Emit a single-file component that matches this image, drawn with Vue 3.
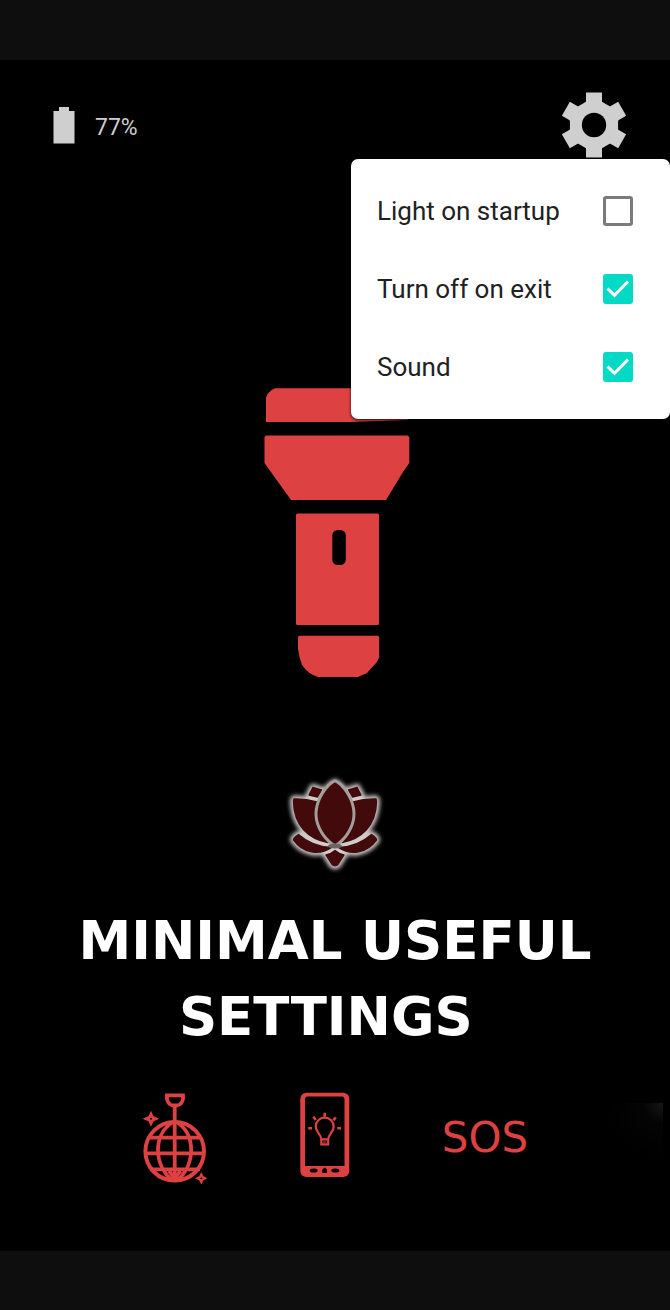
<script setup>
import { ref } from 'vue'

const battery = ref(77)
const options = ref([
  { id: 'startup', label: 'Light on startup', on: false },
  { id: 'exit', label: 'Turn off on exit', on: true },
  { id: 'sound', label: 'Sound', on: true }
])
const teeth = [0, 60, 120]
</script>

<template>
  <div class="app">
    <div class="system-bar"></div>
    <main class="screen">
      <header class="top">
        <div class="battery">
          <svg width="22" height="37" viewBox="0 0 22 37" aria-hidden="true">
            <path d="M6 0H16V4H21.5V36.500H.5V4H6Z" fill="#cfcfcf" />
          </svg>
          <span class="level">{{ battery }}%</span>
        </div>
        <button class="gear" type="button" aria-label="Settings">
          <svg width="66" height="66" viewBox="-33 -33 66 66" aria-hidden="true">
            <g fill="#cfcfcf">
              <path d="M8-23.200 16.100-18.500 24.100-4.700V4.700L16.100 18.500 8 23.200H-8L-16.100 18.500-24.100 4.700V-4.700L-16.100-18.500-8-23.200Z" />
              <rect v-for="a in teeth" :key="a" x="-8" y="-32.500" width="16" height="65" :transform="`rotate(${a})`" />
            </g>
            <circle r="12.200" fill="#000" />
          </svg>
        </button>
        <div class="menu">
          <label v-for="o in options" :key="o.id" class="option" :for="o.id">
            <span>{{ o.label }}</span>
            <span class="tick">
              <input :id="o.id" v-model="o.on" type="checkbox" />
              <svg v-if="o.on" viewBox="0 0 30 30" aria-hidden="true">
                <path d="M4.500 14.500 11.500 21.300 25 7.500" fill="none" stroke="#fff" stroke-width="3" />
              </svg>
            </span>
          </label>
        </div>
      </header>

      <button class="torch" type="button" aria-label="Flashlight">
        <svg width="150" height="290" viewBox="0 0 150 290" aria-hidden="true">
          <g fill="#dd4141">
            <path d="M6 34V10Q7 4 15 .3H138Q146 2 148 9V32L90 34Z" />
            <path d="M6 47.500H147.500L149.300 49V75L143 84 126 112H31L4.500 75V49Z" />
            <rect x="36" y="125.500" width="83" height="111.500" rx="1.500" />
            <path d="M39 247.800H118L119.200 249V269L117 274 111 280.500 107 285 98 289H58Q48 286 42 277L39.500 269 38 261V249Z" />
          </g>
          <rect x="72.300" y="142" width="13.500" height="35" rx="5.500" fill="#000" />
        </svg>
      </button>

      <button class="lotus" type="button" aria-label="Calm light">
        <svg width="100" height="100" viewBox="0 0 100 100" aria-hidden="true">
          <defs>
            <path id="heart" d="M50 9.500C56 12 67.500 26 67.500 41C67.500 55 57 67 50 71C43 67 32.500 55 32.500 41C32.500 26 44 12 50 9.500Z" />
            <path id="side" d="M9 26Q20 25.500 32 29C28 44 33 59 43 69.500C24 66 9 53 8.500 29Q8.500 26.500 9 26Z" />
            <g id="small">
              <path d="M28 14.300 36.500 17 32.500 24 24 22Z" />
              <path d="M13.500 61.500C22 69 33 74 46.500 74.500C34 83 18 80 8.500 67Q8 65 13.500 61.500Z" />
            </g>
            <path id="base" d="M50 77.500Q54 81 59 82L53 91.500Q50 94 47 91.500L41 82Q46 81 50 77.500Z" />
            <g id="petals">
              <use href="#small" />
              <use href="#small" transform="matrix(-1 0 0 1 100 0)" />
              <use href="#side" />
              <use href="#side" transform="matrix(-1 0 0 1 100 0)" />
              <use href="#base" />
              <use href="#heart" />
            </g>
            <filter id="halo" x="-20%" y="-20%" width="140%" height="140%">
              <feGaussianBlur stdDeviation="2" />
            </filter>
          </defs>
          <use href="#petals" fill="#cfcccb" stroke="#cfcccb" stroke-width="7" stroke-linejoin="round" filter="url(#halo)" />
          <use href="#petals" fill="#9b9694" />
          <g fill="#430a0b" stroke="#430a0b" stroke-width="1.400" stroke-linejoin="round">
            <use href="#small" />
            <use href="#small" transform="matrix(-1 0 0 1 100 0)" />
            <use href="#base" />
            <use href="#side" />
            <use href="#side" transform="matrix(-1 0 0 1 100 0)" />
          </g>
          <use href="#heart" fill="#430a0b" stroke="#a39e9c" stroke-width="6" stroke-linejoin="round" paint-order="stroke" />
          <ellipse cx="50" cy="73" rx="7" ry="2.500" fill="#6b6666" />
        </svg>
      </button>

      <h1 class="title">MINIMAL USEFUL<br />SETTINGS&nbsp;</h1>

      <nav class="modes">
        <button type="button" aria-label="Disco">
          <svg width="66" height="92" viewBox="0 0 66 92" fill="none" stroke="#dd4141" stroke-width="3.800" aria-hidden="true">
            <path d="M25 3.300H41V7Q40 12.500 35 13.500H31Q26 12.500 25 7ZM32.700 14V90" />
            <circle cx="32.700" cy="59.300" r="29.300" stroke-width="4" />
            <path d="M31 30C10 43 12 74 31 89M34.500 30C55 43 53 74 34.500 89M7 45.700H58.500M3.500 61.300H62M8 77.300H58M32.700 86 27 79M32.700 86 38.500 79" />
            <path d="M9 20.500 11 24.700 15.500 26.700 11 28.700 9 33 7 28.700 2.500 26.700 7 24.700Z" fill="#dd4141" stroke-width="1.500" />
            <circle cx="9" cy="26.700" r="1" fill="#000" stroke="none" />
            <path d="M59.300 82.500 60.500 85 63 86.300 60.500 87.600 59.300 90 58 87.600 55.500 86.300 58 85Z" stroke-width="2.300" />
          </svg>
        </button>
        <button type="button" aria-label="Screen light">
          <svg width="50" height="86" viewBox="0 0 50 86" aria-hidden="true">
            <path fill="#dd4141" fill-rule="evenodd" d="M6 .8H43.500Q49.300 1.500 49.300 7V79Q49 84.300 43.500 85H6Q.5 84.300 .3 79V7Q.5 1.500 6 .8ZM7 4.500Q5 5 5 7V74H44.500V7Q44.500 5 42.500 4.500Z" />
            <g fill="#000">
              <ellipse cx="13.700" cy="78.500" rx="4" ry="2" />
              <path d="M22.300 81V77.500L24.700 75.500 27 77.500V81Z" />
              <ellipse cx="35.300" cy="78.500" rx="4" ry="2" />
            </g>
            <g fill="none" stroke="#dd4141" stroke-width="2.200">
              <path d="M21.300 47.300C21.300 42 15.700 40.500 15.700 34.500A9 8.800 0 0 1 33.700 34.500C33.700 40.500 28.200 42 28.200 47.300ZM21.300 47V52.300H28.200V47" />
              <path d="M23 50H26.500" stroke-width="1" />
              <path d="M24.700 20.700V24.700M13.300 24.700 15.700 28M35.800 25.300 33.300 28.300M8.300 36.300H12M37.300 36.300H41" stroke-width="2.600" />
            </g>
          </svg>
        </button>
        <button class="sos" type="button">SOS</button>
      </nav>
    </main>
    <div class="system-bar bottom"></div>
  </div>
</template>

<style>
body {
  margin: 0;
  background: #000;
}
</style>

<style scoped>
.app {
  min-height: 100vh;
  display: flex;
  flex-direction: column;
  background: #000;
}
.system-bar {
  height: 60px;
  background: #0e0e0e;
}
.system-bar.bottom {
  height: 59px;
}
.screen {
  position: relative;
  flex: 1;
  display: flex;
  flex-direction: column;
  align-items: center;
}
.screen::after {
  content: '';
  position: absolute;
  right: 7px;
  bottom: 68px;
  width: 80px;
  height: 80px;
  background: radial-gradient(ellipse at top right, #161616, #040404 18%, #000 50%);
}
button {
  display: block;
  padding: 0;
  border: 0;
  background: none;
  cursor: pointer;
}
svg {
  display: block;
}
.top {
  position: relative;
  align-self: stretch;
  box-sizing: border-box;
  height: 99px;
  padding: 32px 43px 0 53px;
  display: flex;
  justify-content: space-between;
  align-items: flex-start;
}
.battery {
  height: 66px;
  display: flex;
  align-items: center;
  gap: 20px;
  color: #cfcfcf;
  font: 23px/28px Roboto, sans-serif;
}
.level {
  padding-top: 5px;
}
.menu {
  position: absolute;
  top: 100%;
  right: 0;
  z-index: 1;
  box-sizing: border-box;
  width: 319px;
  padding: 13px 37px 13px 26px;
  border-radius: 7px;
  background: #fff;
  box-shadow: 0 1px 3px rgba(0, 0, 0, 0.9);
}
.option {
  height: 78px;
  display: flex;
  align-items: center;
  justify-content: space-between;
  color: #212121;
  font: 26px/32px Roboto, sans-serif;
}
.tick {
  position: relative;
  width: 30px;
  height: 30px;
}
.tick input {
  appearance: none;
  box-sizing: border-box;
  display: block;
  width: 30px;
  height: 30px;
  margin: 0;
  border: 3px solid #7b7b7b;
  border-radius: 3px;
}
.tick input:checked {
  border-color: #03dac6;
  background: #03dac6;
}
.tick svg {
  position: absolute;
  inset: 0;
  pointer-events: none;
}
.torch {
  margin-top: 229px;
}
.lotus {
  margin-top: 95px;
}
.title {
  margin: 30px 0 0;
  color: #fff;
  font: bold 53px/76px Verdana, "DejaVu Sans", sans-serif;
  text-align: center;
}
.modes {
  margin-top: 37px;
  padding-bottom: 60px;
  display: flex;
  align-items: flex-start;
  gap: 92px;
}
.sos {
  color: #dd4141;
  font: 42px/92px Verdana, "DejaVu Sans", sans-serif;
}
</style>
